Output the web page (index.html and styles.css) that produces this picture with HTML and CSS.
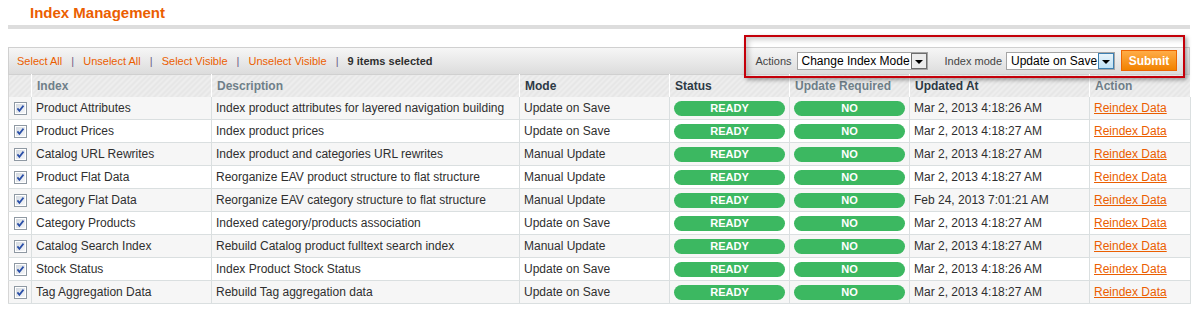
FILE: index.html
```html
<!DOCTYPE html>
<html lang="en">
<head>
    <meta charset="UTF-8">
    <meta name="viewport" content="width=device-width, initial-scale=1.0">
    <link rel="stylesheet" href="styles.css">
</head>
<body>
    <div id="page">
        <div class="content-header">
            <h3>Index Management</h3>
        </div>

        <div class="grid">
            <div class="massaction">
                <div class="mass-links">
                    <a href="#">Select All</a>
                    <span class="sep">|</span>
                    <a href="#">Unselect All</a>
                    <span class="sep">|</span>
                    <a href="#">Select Visible</a>
                    <span class="sep">|</span>
                    <a href="#">Unselect Visible</a>
                    <span class="sep">|</span>
                    <strong>9 items selected</strong>
                </div>
                <div class="mass-form">
                    <label>Actions</label>
                    <span class="select sel-action">Change Index Mode<span class="arrow"></span></span>
                    <label class="mode-label">Index mode</label>
                    <span class="select sel-mode">Update on Save<span class="arrow hover"></span></span>
                    <button type="button" class="submit">Submit</button>
                </div>
                <div class="highlight"></div>
            </div>

            <table class="data">
                <colgroup>
                    <col style="width:23px">
                    <col style="width:180px">
                    <col style="width:308px">
                    <col style="width:150px">
                    <col style="width:120px">
                    <col style="width:120px">
                    <col style="width:180px">
                    <col style="width:101px">
                </colgroup>
                <thead>
                    <tr>
                        <th></th>
                        <th class="muted">Index</th>
                        <th class="muted">Description</th>
                        <th>Mode</th>
                        <th>Status</th>
                        <th class="muted">Update Required</th>
                        <th>Updated At</th>
                        <th class="muted">Action</th>
                    </tr>
                </thead>
                <tbody id="rows"></tbody>
            </table>
        </div>
    </div>

    <script>
        var indexes = [
            ['Product Attributes', 'Index product attributes for layered navigation building', 'Update on Save', 'Mar 2, 2013 4:18:26 AM'],
            ['Product Prices', 'Index product prices', 'Update on Save', 'Mar 2, 2013 4:18:27 AM'],
            ['Catalog URL Rewrites', 'Index product and categories URL rewrites', 'Manual Update', 'Mar 2, 2013 4:18:27 AM'],
            ['Product Flat Data', 'Reorganize EAV product structure to flat structure', 'Manual Update', 'Mar 2, 2013 4:18:27 AM'],
            ['Category Flat Data', 'Reorganize EAV category structure to flat structure', 'Manual Update', 'Feb 24, 2013 7:01:21 AM'],
            ['Category Products', 'Indexed category/products association', 'Update on Save', 'Mar 2, 2013 4:18:27 AM'],
            ['Catalog Search Index', 'Rebuild Catalog product fulltext search index', 'Manual Update', 'Mar 2, 2013 4:18:27 AM'],
            ['Stock Status', 'Index Product Stock Status', 'Update on Save', 'Mar 2, 2013 4:18:26 AM'],
            ['Tag Aggregation Data', 'Rebuild Tag aggregation data', 'Update on Save', 'Mar 2, 2013 4:18:27 AM']
        ];

        var checkbox = '<svg class="cb" width="13" height="13" viewBox="0 0 13 13">' +
            '<defs><linearGradient id="cbg" x1="0" y1="0" x2="1" y2="1">' +
            '<stop offset="0" stop-color="#d3d9e0"/><stop offset="1" stop-color="#f6f7f9"/></linearGradient></defs>' +
            '<rect x="0.5" y="0.5" width="12" height="12" fill="#fff" stroke="#8f99a3"/>' +
            '<rect x="2" y="2" width="9" height="9" fill="url(#cbg)"/>' +
            '<path d="M3.4 6.4 L5.4 8.8 L9.5 3.6" fill="none" stroke="#2a4fa8" stroke-width="1.7"/></svg>';

        var html = '';
        for (var i = 0; i < indexes.length; i++) {
            var r = indexes[i];
            html += '<tr class="' + (i % 2 === 0 ? 'odd' : 'even') + '">' +
                '<td class="center">' + checkbox + '</td>' +
                '<td>' + r[0] + '</td>' +
                '<td>' + r[1] + '</td>' +
                '<td>' + r[2] + '</td>' +
                '<td><span class="badge">READY</span></td>' +
                '<td><span class="badge">NO</span></td>' +
                '<td>' + r[3] + '</td>' +
                '<td><a href="#">Reindex Data</a></td>' +
                '</tr>';
        }
        document.getElementById('rows').innerHTML = html;
    </script>
</body>
</html>
```

FILE: styles.css
```css
body {
    margin: 0;
    font-family: "Liberation Sans", Arial, sans-serif;
    font-size: 12px;
    color: #2f2f2f;
    background-color: #fff;
}

#page {
    padding: 0 9px 0 8px;
}

a {
    color: #eb5e00;
}

.content-header {
    padding: 4px 0 0 22px;
    height: 21px;
    border-bottom: 4px solid #dddddd;
}

.content-header h3 {
    margin: 0;
    font-size: 15px;
    line-height: 18px;
    font-weight: bold;
    color: #eb5e00;
}

.grid {
    margin-top: 18px;
}

.massaction {
    position: relative;
    display: flex;
    justify-content: space-between;
    align-items: center;
    height: 26px;
    padding: 0 12px 0 8px;
    border: 1px solid #d0d0d0;
    border-bottom: 0;
    background: linear-gradient(#f6f6f6, #dcdcdc);
    font-size: 11px;
}

.mass-links {
    margin-top: -1px;
}

.mass-links a {
    text-decoration: none;
}

.mass-links .sep {
    color: #6b5d86;
    margin: 0 6px;
}

.mass-links strong {
    color: #2f2f2f;
}

.mass-form {
    display: flex;
    align-items: center;
    margin-top: -1px;
}

.mass-form label {
    color: #444;
    margin-right: 5px;
}

.mass-form .mode-label {
    margin-left: 17px;
    margin-right: 4px;
}

.select {
    position: relative;
    display: inline-block;
    box-sizing: border-box;
    height: 18px;
    line-height: 16px;
    padding-left: 4px;
    border: 1px solid #a5a5a5;
    background: #fff;
    font-size: 12px;
    color: #000;
    white-space: nowrap;
    overflow: hidden;
}

.sel-action {
    width: 131px;
}

.sel-mode {
    width: 109px;
}

.arrow {
    position: absolute;
    right: 0;
    top: 0;
    width: 16px;
    height: 16px;
    box-sizing: border-box;
    border: 1px solid #6d6d6d;
    background: #ececec;
}

.arrow::after {
    content: "";
    position: absolute;
    left: 3px;
    top: 6px;
    border-left: 4px solid transparent;
    border-right: 4px solid transparent;
    border-top: 4px solid #000;
}

.arrow.hover {
    border-color: #3c7fb1;
    background: linear-gradient(#e8f4fb, #bfe1f5);
}

.submit {
    margin-left: 6px;
    height: 21px;
    width: 56px;
    padding: 0;
    border: 1px solid #ed6502;
    background: linear-gradient(#ffac47, #f18200);
    color: #fff;
    font-family: "Liberation Sans", Arial, sans-serif;
    font-size: 12px;
    font-weight: bold;
}

.highlight {
    position: absolute;
    left: 735px;
    top: -13px;
    width: 437px;
    height: 39px;
    border: 2px solid #c4000a;
    box-shadow: 2px 2px 4px rgba(0, 0, 0, 0.35), inset 3px 3px 5px rgba(0, 0, 0, 0.18);
    pointer-events: none;
}

table.data {
    width: 100%;
    table-layout: fixed;
    border-collapse: collapse;
    border: 1px solid #d6d6d6;
    border-top: 0;
}

table.data th {
    height: 22px;
    padding: 0 4px 0 5px;
    text-align: left;
    font-size: 12px;
    font-weight: bold;
    color: #2d3a45;
    border-right: 1px solid #fff;
    border-top: 1px solid #d0d0d0;
    background: repeating-linear-gradient(-45deg, #e6e6e6 0, #e6e6e6 2px, #eeeeee 2px, #eeeeee 4px);
}

table.data th.muted {
    color: #6f7f89;
}

table.data td {
    height: 22px;
    padding: 0 4px 0 4px;
    border-right: 1px solid #dadfe0;
    border-bottom: 1px solid #dadfe0;
    white-space: nowrap;
    overflow: hidden;
    color: #2f2f2f;
}

table.data tr.odd td {
    background-color: #f6f6f6;
}

table.data td.center {
    padding: 0;
    text-align: center;
}

.cb {
    display: block;
    margin: 1px auto 0 auto;
}

.badge {
    display: block;
    height: 15px;
    line-height: 15px;
    border-radius: 8px;
    background-color: #3cb861;
    color: #fff;
    font-size: 11px;
    font-weight: bold;
    text-align: center;
}
```
